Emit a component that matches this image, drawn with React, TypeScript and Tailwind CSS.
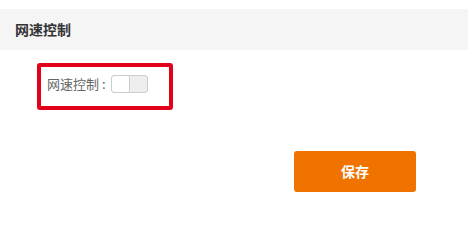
export default function App() {
  return (
    <div className="h-[233px] w-[468px] bg-white pt-[9px] font-['Microsoft_YaHei','Noto_Sans_CJK_SC',sans-serif]">
      <div className="flex h-[41px] items-center bg-[#f5f5f5] pl-[15px]">
        <span className="text-[14px] font-bold text-[#333]">网速控制</span>
      </div>
      <div className="ml-[37px] mt-[13px] flex h-[47px] w-[136px] items-center rounded-[3px] border-4 border-[#e2001a] pb-[5px] pl-[6px]">
        <span className="text-[13px] text-[#666]">网速控制</span>
        <span className="ml-[3px] mr-[5px] text-[13px] text-[#666]">:</span>
        <div className="flex h-[18px] w-[37px] overflow-hidden rounded-[3px] border border-[#ccc] bg-[#eee]">
          <div className="h-full w-[18px] rounded-[3px] border-r border-[#ccc] bg-white" />
        </div>
      </div>
      <div className="ml-[294px] mt-[41px]">
        <button className="h-[41px] w-[122px] rounded-[3px] bg-[#f07300] text-[14px] font-bold text-white">
          保存
        </button>
      </div>
    </div>
  )
}
